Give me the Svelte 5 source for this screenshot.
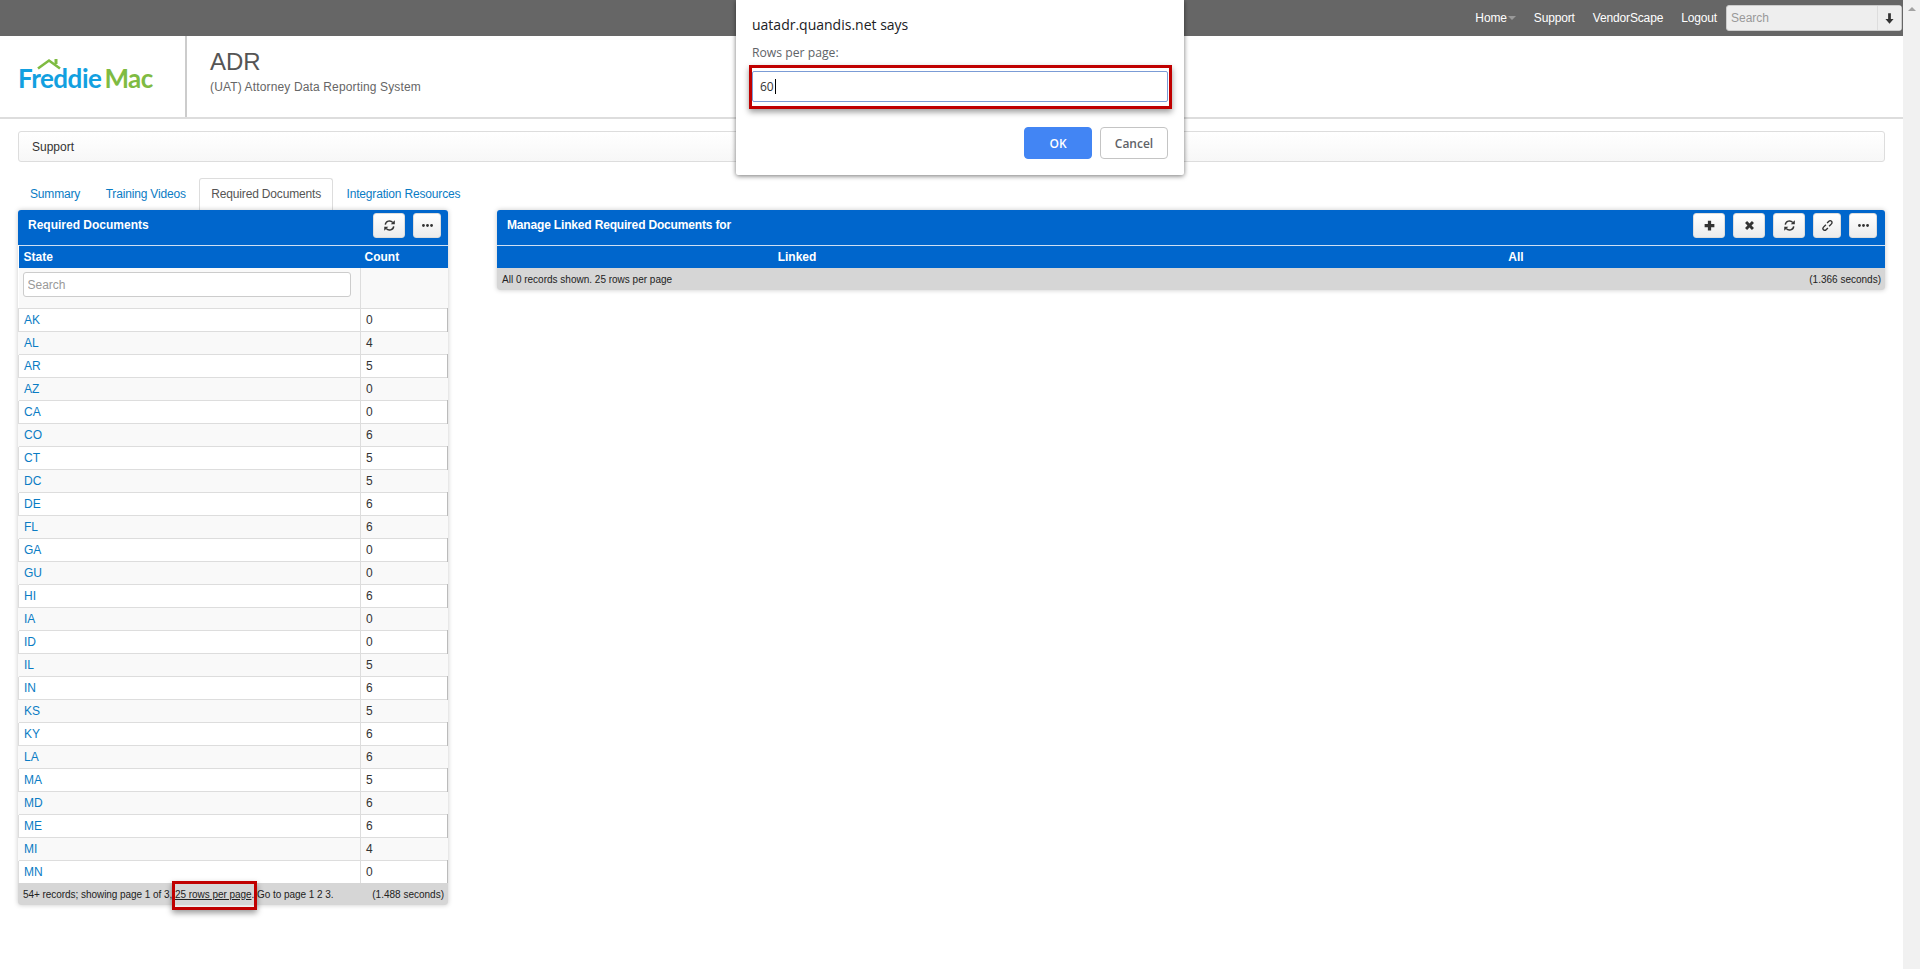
<script>
  const states = [
    ['AK', 0], ['AL', 4], ['AR', 5], ['AZ', 0], ['CA', 0], ['CO', 6], ['CT', 5], ['DC', 5], ['DE', 6],
    ['FL', 6], ['GA', 0], ['GU', 0], ['HI', 6], ['IA', 0], ['ID', 0], ['IL', 5], ['IN', 6], ['KS', 5],
    ['KY', 6], ['LA', 6], ['MA', 5], ['MD', 6], ['ME', 6], ['MI', 4], ['MN', 0]
  ];
  const navLinks = ['Support', 'VendorScape', 'Logout'];
  const tabs = ['Summary', 'Training Videos', 'Required Documents', 'Integration Resources'];
  const activeTab = 'Required Documents';
</script>

{#snippet refresh()}
  <svg class="icon" viewBox="0 0 16 16">
    <path d="M2.800 7a5.300 5.300 0 0 1 9.200-2.800" fill="none" stroke="#333" stroke-width="1.800" />
    <path d="M14.500 1.500v5h-5z" fill="#333" />
    <path d="M13.200 9a5.300 5.300 0 0 1-9.200 2.800" fill="none" stroke="#333" stroke-width="1.800" />
    <path d="M1.500 14.500v-5h5z" fill="#333" />
  </svg>
{/snippet}

{#snippet more()}
  <svg class="icon" viewBox="0 0 16 16">
    <circle cx="3" cy="8" r="1.700" fill="#333" />
    <circle cx="8" cy="8" r="1.700" fill="#333" />
    <circle cx="13" cy="8" r="1.700" fill="#333" />
  </svg>
{/snippet}

<div class="page">
  <div class="main">
    <nav class="topbar">
      <a class="nav-link" href="#home">Home<span class="caret"></span></a>
      {#each navLinks as link}
        <a class="nav-link" href="#link">{link}</a>
      {/each}
      <div class="nav-search">
        <input type="text" placeholder="Search" />
        <button aria-label="Go">
          <svg class="icon" viewBox="0 0 16 16"><path d="M6.300 1.500h3.400v7h3.300L8 14.500 3 8.500h3.300z" fill="#333" /></svg>
        </button>
      </div>
    </nav>

    <header class="masthead">
      <div class="logo">
        <svg class="roof" viewBox="0 0 24 12">
          <path d="M1 10.500 12 2.500l11 8" fill="none" stroke="#7fbb42" stroke-width="2.600" />
          <path d="M17.500 1h3v5h-3z" fill="#7fbb42" />
        </svg>
        <span class="freddie">Freddie</span><span class="mac">Mac</span>
      </div>
      <div class="app-title">
        <h1>ADR</h1>
        <p>(UAT) Attorney Data Reporting System</p>
      </div>
    </header>

    <div class="content">
      <div class="crumb">Support</div>

      <ul class="tabs">
        {#each tabs as tab}
          <li class:active={tab === activeTab}>{tab}</li>
        {/each}
      </ul>

      <div class="panels">
        <section class="panel left">
          <div class="panel-head">
            <span>Required Documents</span>
            <div class="tools">
              <button class="tool" aria-label="Refresh">{@render refresh()}</button>
              <button class="tool narrow" aria-label="More">{@render more()}</button>
            </div>
          </div>
          <table>
            <colgroup><col class="col-state" /><col /></colgroup>
            <thead>
              <tr><th>State</th><th>Count</th></tr>
            </thead>
            <tbody>
              <tr class="filter">
                <td><input type="text" placeholder="Search" /></td>
                <td></td>
              </tr>
              {#each states as [code, count]}
                <tr class="row">
                  <td><a href="#state">{code}</a></td>
                  <td>{count}</td>
                </tr>
              {/each}
            </tbody>
          </table>
          <div class="panel-foot">
            <span class="paging">54+ records; showing page 1 of 3, <u>25 rows per page</u>. Go to page 1 2 3.</span>
            <span>(1.488 seconds)</span>
          </div>
          <div class="callout rows-callout"></div>
        </section>

        <section class="panel right">
          <div class="panel-head">
            <span class="manage-title">Manage Linked Required Documents for</span>
            <div class="tools">
              <button class="tool" aria-label="Add">
                <svg class="icon" viewBox="0 0 16 16"><path d="M6 2h4v4h4v4h-4v4H6v-4H2V6h4z" fill="#333" /></svg>
              </button>
              <button class="tool" aria-label="Remove">
                <svg class="icon" viewBox="0 0 16 16"><path d="M5 2.500 8 5.500l3-3L13.500 5l-3 3 3 3L11 13.500l-3-3-3 3L2.500 11l3-3-3-3z" fill="#333" /></svg>
              </button>
              <button class="tool" aria-label="Refresh">{@render refresh()}</button>
              <button class="tool narrow" aria-label="Link">
                <svg class="icon link" viewBox="0 0 16 16">
                  <path d="M7.500 5 9.700 2.800a2.200 2.200 0 0 1 3.200 3.200L10 9" fill="none" stroke="#333" stroke-width="1.700" />
                  <path d="M8.500 11 6.300 13.200a2.200 2.200 0 0 1-3.200-3.200L6 7" fill="none" stroke="#333" stroke-width="1.700" />
                </svg>
              </button>
              <button class="tool narrow" aria-label="More">{@render more()}</button>
            </div>
          </div>
          <div class="linked-head">
            <span>Linked</span>
            <span>All</span>
          </div>
          <div class="panel-foot">
            <span>All 0 records shown. 25 rows per page</span>
            <span>(1.366 seconds)</span>
          </div>
        </section>
      </div>
    </div>
  </div>

  <div class="scrollbar"><span class="scroll-up"></span></div>

  <div class="dialog">
    <div class="dialog-title">uatadr.quandis.net says</div>
    <div class="dialog-label">Rows per page:</div>
    <div class="dialog-input">60<span class="cursor"></span></div>
    <div class="callout input-callout"></div>
    <div class="dialog-actions">
      <button class="ok">OK</button>
      <button class="cancel">Cancel</button>
    </div>
  </div>
</div>

<style>
  :global(body) {
    margin: 0;
    background: #fff;
  }

  .page {
    display: flex;
    height: 969px;
    overflow: hidden;
    position: relative;
    font-family: "Liberation Sans", Arial, sans-serif;
    font-size: 12px;
    color: #333;
  }

  .main {
    flex: 1;
    min-width: 0;
  }

  .scrollbar {
    width: 17px;
    background: #f1f1f1;
    display: flex;
    justify-content: center;
    padding-top: 7px;
    box-sizing: border-box;
  }

  .scroll-up {
    width: 0;
    height: 0;
    border-left: 4px solid transparent;
    border-right: 4px solid transparent;
    border-bottom: 4px solid #a3a3a3;
  }

  .topbar {
    height: 36px;
    background: #666;
    display: flex;
    align-items: center;
    justify-content: flex-end;
    gap: 18px;
    padding-right: 1px;
    box-sizing: border-box;
  }

  .nav-link {
    color: #fff;
    text-decoration: none;
    letter-spacing: -0.15px;
  }

  .caret {
    display: inline-block;
    margin-left: 1px;
    vertical-align: 2px;
    border-left: 4px solid transparent;
    border-right: 4px solid transparent;
    border-top: 4px solid #999;
  }

  .nav-search {
    display: flex;
    width: 176px;
    height: 26px;
    margin-left: -9px;
    background: #eee;
    border: 1px solid #ccc;
    border-radius: 3px;
    box-sizing: border-box;
  }

  .nav-search input {
    flex: 1;
    min-width: 0;
    border: 0;
    background: transparent;
    padding: 0 4px;
    font: 12px "Liberation Sans", Arial, sans-serif;
    outline: none;
  }

  .nav-search button {
    width: 24px;
    padding: 0;
    border: 0;
    border-left: 1px solid #ddd;
    background: #eee;
    display: flex;
    align-items: center;
    justify-content: center;
  }

  .masthead {
    display: flex;
    height: 83px;
    border-bottom: 2px solid #ddd;
    box-sizing: border-box;
  }

  .logo {
    width: 187px;
    height: 81px;
    border-right: 2px solid #ccc;
    box-sizing: border-box;
    padding: 26px 0 0 18px;
    font-family: Lato, sans-serif;
    font-weight: 700;
    font-size: 26px;
    line-height: 32px;
    letter-spacing: -0.5px;
    position: relative;
    white-space: nowrap;
  }

  .roof {
    position: absolute;
    left: 37px;
    top: 22px;
    width: 24px;
    height: 12px;
  }

  .freddie {
    color: #12a0e0;
    margin-right: 3px;
  }

  .mac {
    color: #7fbb42;
  }

  .app-title {
    padding: 12px 0 0 23px;
    color: #666;
  }

  .app-title h1 {
    margin: 0;
    font-size: 24px;
    font-weight: 400;
    line-height: 28px;
    color: #555;
  }

  .app-title p {
    margin: 4px 0 0;
    font-size: 12px;
    line-height: 14px;
    letter-spacing: 0.14px;
  }

  .content {
    padding: 12px 18px 0;
  }

  .crumb {
    height: 31px;
    line-height: 30px;
    box-sizing: border-box;
    padding-left: 13px;
    border: 1px solid #ddd;
    border-radius: 3px;
    background: linear-gradient(#fff, #f7f7f7);
  }

  .tabs {
    display: flex;
    list-style: none;
    margin: 16px 0 0;
    padding: 0;
    height: 32px;
    letter-spacing: -0.17px;
  }

  .tabs li {
    padding: 0 11px;
    margin-right: 1.5px;
    border: 1px solid transparent;
    border-bottom: 0;
    border-radius: 3px 3px 0 0;
    line-height: 30px;
    color: #0a7cc4;
  }

  .tabs li.active {
    color: #555;
    border-color: #ddd;
    background: #fff;
  }

  .panels {
    display: flex;
    gap: 49px;
    align-items: flex-start;
  }

  .panel {
    position: relative;
    border-radius: 3px;
    box-shadow: 0 0 5px rgba(0, 0, 0, 0.22);
    background: #fff;
  }

  .panel.left {
    width: 430px;
    flex: none;
  }

  .panel.right {
    flex: 1;
  }

  .panel-head {
    height: 35px;
    display: flex;
    align-items: flex-start;
    justify-content: space-between;
    background: #0066cc;
    color: #fff;
    font-weight: 700;
    padding: 3px 8px 0 10px;
    border-radius: 3px 3px 0 0;
    box-sizing: border-box;
    line-height: 25px;
  }

  .panel.left .panel-head {
    padding-right: 7px;
  }

  .manage-title {
    letter-spacing: -0.17px;
  }

  .tools {
    display: flex;
    gap: 8px;
  }

  .tool {
    width: 32px;
    height: 25px;
    padding: 0;
    border: 1px solid #ddd;
    border-radius: 3px;
    background: linear-gradient(#fff, #ececec);
    display: flex;
    align-items: center;
    justify-content: center;
  }

  .tool.narrow {
    width: 28px;
  }

  .icon {
    width: 13px;
    height: 13px;
    display: block;
  }

  table {
    width: 100%;
    table-layout: fixed;
    border-collapse: collapse;
    border-top: 1px solid #cfe0f3;
  }

  .col-state {
    width: 342px;
  }

  th {
    height: 22px;
    padding: 0 4px;
    background: #0066cc;
    color: #fff;
    text-align: left;
    font-size: 12px;
  }

  th:first-child {
    padding-left: 5px;
  }

  td {
    padding: 0 5px;
    height: 22px;
    border-top: 1px solid #ddd;
    border-left: 1px solid #ddd;
    background: #f9f9f9;
  }

  td:first-child {
    padding-left: 5px;
  }

  .row:nth-child(even) td {
    background: #fff;
  }

  .row:nth-child(even) td:last-child {
    border-right: 1px solid #bbb;
  }

  .row:nth-child(odd) td:first-child {
    border-left-color: #f9f9f9;
  }

  .row a {
    color: #0a7cc4;
    text-decoration: none;
  }

  .filter td {
    height: 40px;
    padding: 0;
    vertical-align: top;
    border-top: 0;
    border-left-color: #ddd;
  }

  .filter td:first-child {
    border-left: 0;
  }

  .filter input {
    display: block;
    width: 328px;
    height: 25px;
    margin: 4px 0 0 4px;
    padding: 0 4px;
    border: 1px solid #ccc;
    border-radius: 3px;
    background: #fff;
    box-sizing: border-box;
    font: 12px "Liberation Sans", Arial, sans-serif;
    outline: none;
  }

  input::placeholder {
    color: #999;
    opacity: 1;
  }

  .panel-foot {
    height: 22px;
    display: flex;
    justify-content: space-between;
    align-items: center;
    padding: 0 4px 0 5px;
    background: #d6d6d6;
    color: #222;
    font-size: 10px;
    border-radius: 0 0 3px 3px;
  }

  .paging {
    letter-spacing: -0.05px;
  }

  .linked-head {
    display: grid;
    grid-template-columns: 600px 1fr;
    height: 23px;
    line-height: 23px;
    background: #0066cc;
    color: #fff;
    font-weight: 700;
    text-align: center;
    border-top: 1px solid #cfe0f3;
    box-sizing: border-box;
  }

  .linked-head span:last-child {
    padding-left: 50px;
  }

  .callout {
    position: absolute;
    border: 3px solid #c00000;
    box-sizing: border-box;
    box-shadow: 0 3px 6px rgba(0, 0, 0, 0.4);
  }

  .rows-callout {
    left: 154px;
    bottom: -5px;
    width: 85px;
    height: 29px;
  }

  .dialog {
    position: absolute;
    left: 736px;
    top: 0;
    width: 448px;
    height: 175px;
    background: #fff;
    border-radius: 0 0 2px 2px;
    box-shadow: 0 1px 5px rgba(0, 0, 0, 0.55);
    padding: 0 16px;
    box-sizing: border-box;
    font-family: "Open Sans", "Noto Sans", sans-serif;
  }

  .dialog-title {
    padding-top: 15px;
    font-size: 14px;
    line-height: 20px;
    color: #202124;
  }

  .dialog-label {
    margin-top: 9px;
    font-size: 12.2px;
    line-height: 18px;
    color: #5f6368;
  }

  .dialog-input {
    margin-top: 9px;
    height: 31px;
    line-height: 29px;
    padding-left: 7px;
    border: 1px solid #7b9cd6;
    border-radius: 2px;
    box-sizing: border-box;
    font-size: 12px;
    color: #333;
  }

  .cursor {
    display: inline-block;
    width: 1px;
    height: 15px;
    margin-left: 1px;
    vertical-align: -3px;
    background: #000;
  }

  .input-callout {
    left: 13px;
    top: 65px;
    width: 423px;
    height: 44px;
  }

  .dialog-actions {
    display: flex;
    justify-content: flex-end;
    gap: 8px;
    margin-top: 25px;
  }

  .dialog-actions button {
    width: 68px;
    height: 32px;
    padding: 0;
    border-radius: 4px;
    font-family: "Open Sans", "Noto Sans", sans-serif;
    font-size: 12px;
    font-weight: 600;
  }

  .ok {
    background: #4285f4;
    border: 1px solid #4285f4;
    color: #fff;
  }

  .cancel {
    background: #fff;
    border: 1px solid #c4c4c4;
    color: #5f6368;
  }
</style>
